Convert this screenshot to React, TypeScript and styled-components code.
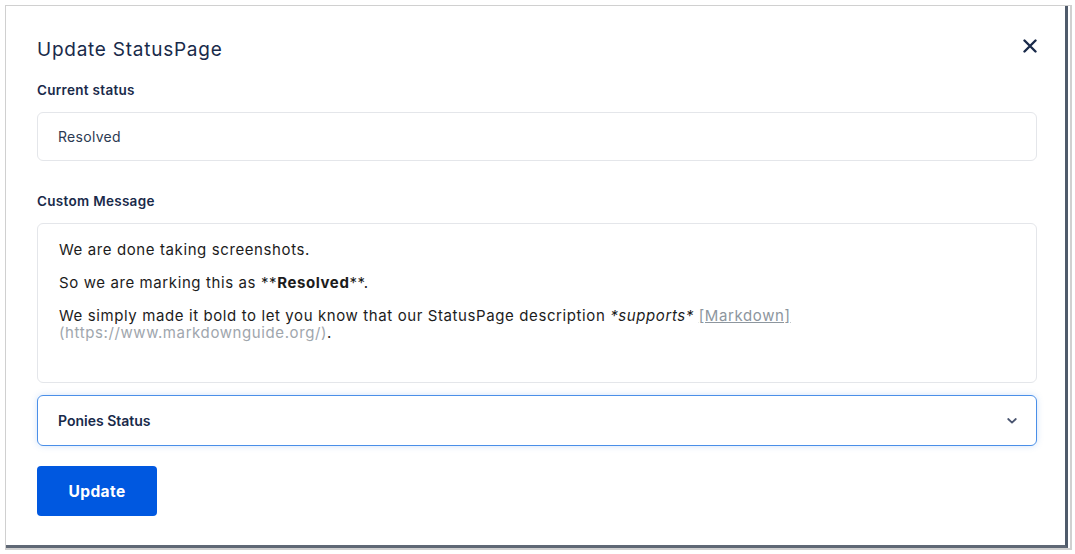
import * as React from 'react';
import styled, { createGlobalStyle } from 'styled-components';

const Global = createGlobalStyle`
  * { box-sizing: border-box; }
  html, body { margin: 0; padding: 0; background: #fff; }
  body { font-family: Inter, "Open Sans", Arial, sans-serif; }
`

// Outer frame around the dialog
const Page = styled.div`
  width: 1075px;
  height: 554px;
  padding: 5px 3px 4px 5px;
`

const Frame = styled.div`
  height: 100%;
  border: 1px solid #d0d0d0;
  border-right-width: 2px;
  border-bottom-width: 2px;
  display: flex;
`

const Modal = styled.div`
  flex: 1;
  background: #fff;
  border-right: 3px solid #4f5b6b;
  border-bottom: 3px solid #5f6875;
  margin-right: 2px;
  padding: 28px 28px 0 31px;
  display: flex;
  flex-direction: column;
`

// Title row
const Header = styled.div`
  display: flex;
  justify-content: space-between;
  align-items: center;
  height: 30px;
`

const Title = styled.h1`
  margin: 0;
  font-size: 19px;
  font-weight: 400;
  color: #192a4a;
  letter-spacing: 0.75px;
`

const Close = styled.button`
  border: 0;
  background: none;
  padding: 0;
  width: 16px;
  height: 16px;
  display: flex;
  align-items: center;
  justify-content: center;
  cursor: pointer;
  margin-right: -1px;
  margin-top: -6px;
`

// Form parts
const Label = styled.div<{ $top: number }>`
  font-size: 13.5px;
  font-weight: 600;
  color: #192a4a;
  letter-spacing: 0.3px;
  margin-top: ${(p) => p.$top}px;
  margin-bottom: 14px;
`

const Field = styled.div`
  height: 49px;
  border: 1px solid #e4e6ea;
  border-radius: 6px;
  display: flex;
  align-items: center;
  padding: 0 20px;
  font-size: 14px;
  letter-spacing: 0.3px;
  color: #2c3a52;
`

const TextArea = styled.div`
  height: 160px;
  border: 1px solid #e4e6ea;
  border-radius: 6px;
  padding: 17px 21px 0;
  font-size: 15px;
  letter-spacing: 0.6px;
  color: #1c1c1c;

  p {
    margin: 0 0 16px;
    line-height: 17px;
  }
`

const Muted = styled.span`
  color: #a0a6ad;
`

const LinkText = styled.span`
  color: #8d969e;
  text-decoration: underline;
`

const Select = styled.div`
  margin-top: 12px;
  height: 51px;
  border: 1px solid #4a8fe8;
  border-radius: 6px;
  box-shadow: 0 0 6px rgba(74, 143, 232, 0.25);
  display: flex;
  align-items: center;
  justify-content: space-between;
  padding: 0 19px 0 20px;
  font-size: 14px;
  font-weight: 600;
  color: #192a4a;
`

const Button = styled.button`
  margin-top: 20px;
  width: 120px;
  height: 50px;
  border: 0;
  border-radius: 4px;
  background: #0058e0;
  color: #fff;
  font-family: inherit;
  font-size: 15.5px;
  font-weight: 700;
  letter-spacing: 0.4px;
  cursor: pointer;
`

export default () => (
  <Page>
    <Global />
    <Frame>
      <Modal>
        <Header>
          <Title>Update StatusPage</Title>
          <Close aria-label="Close">
            <svg width="14" height="14" viewBox="0 0 14 14">
              <path d="M1.5 1.5 L12.5 12.5 M12.5 1.5 L1.5 12.5" stroke="#192a4a" strokeWidth="2.4" strokeLinecap="round" />
            </svg>
          </Close>
        </Header>

        <Label $top={18}>Current status</Label>
        <Field>Resolved</Field>

        <Label $top={32}>Custom Message</Label>
        <TextArea>
          <p>We are done taking screenshots.</p>
          <p>So we are marking this as **<b>Resolved</b>**.</p>
          <p>
            We simply made it bold to let you know that our StatusPage description <i>*supports*</i>{' '}
            <LinkText>[Markdown]</LinkText>
            <br />
            <Muted>(https://www.markdownguide.org/)</Muted>.
          </p>
        </TextArea>

        <Select>
          <span>Ponies Status</span>
          <svg width="10" height="6" viewBox="0 0 10 6">
            <path d="M1.2 1 L5 4.6 L8.8 1" fill="none" stroke="#4a5570" strokeWidth="1.8" strokeLinecap="round" strokeLinejoin="round" />
          </svg>
        </Select>

        <div>
          <Button>Update</Button>
        </div>
      </Modal>
    </Frame>
  </Page>
)
